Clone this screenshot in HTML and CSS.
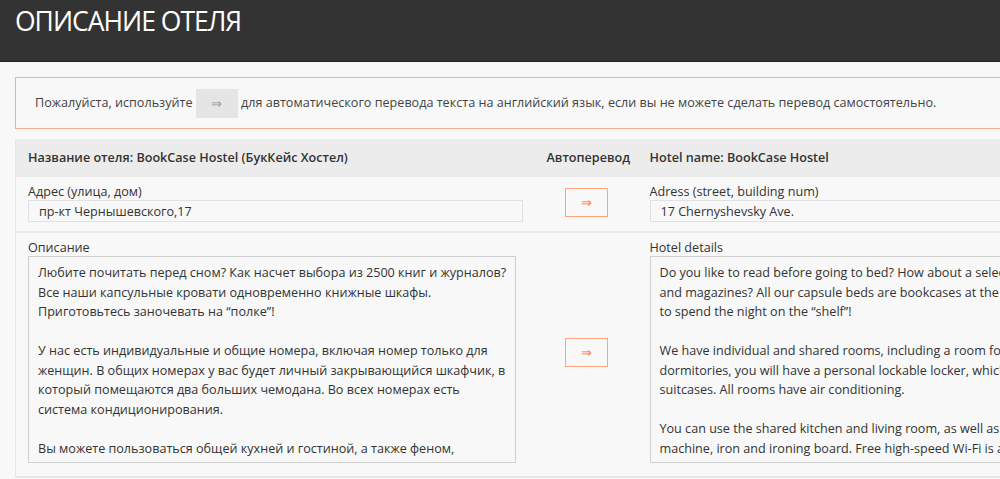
FILE: index.html
```html
<!DOCTYPE html>
<html lang="ru">
  <head>
    <meta charset="UTF-8" />
    <meta name="viewport" content="width=device-width, initial-scale=1.0" />
    <title>Описание отеля</title>
    <link rel="stylesheet" href="styles.css">
  </head>
  <body>
    <div class="page-header">
      <h1>ОПИСАНИЕ ОТЕЛЯ</h1>
    </div>
    <div class="container">
      <div class="notice">
        Пожалуйста, используйте <span class="notice-btn">&rArr;</span> для автоматического перевода текста на английский язык, если вы не можете сделать перевод самостоятельно.
      </div>
      <table class="translate-table">
        <colgroup>
          <col class="col-src" />
          <col class="col-auto" />
          <col class="col-dst" />
        </colgroup>
        <thead>
          <tr>
            <th>Название отеля: BookCase Hostel (БукКейс Хостел)</th>
            <th class="center">Автоперевод</th>
            <th>Hotel name: BookCase Hostel</th>
          </tr>
        </thead>
        <tbody>
          <tr>
            <td>
              <label class="field-label">Адрес (улица, дом)</label>
              <input type="text" class="field-input" value="пр-кт Чернышевского,17" />
            </td>
            <td class="center">
              <button class="translate-btn">&rArr;</button>
            </td>
            <td>
              <label class="field-label">Adress (street, building num)</label>
              <input type="text" class="field-input" value="17 Chernyshevsky Ave." />
            </td>
          </tr>
          <tr>
            <td>
              <label class="field-label">Описание</label>
              <textarea class="field-text src-text" wrap="off">Любите почитать перед сном? Как насчет выбора из 2500 книг и журналов?
Все наши капсульные кровати одновременно книжные шкафы.
Приготовьтесь заночевать на “полке”!

У нас есть индивидуальные и общие номера, включая номер только для
женщин. В общих номерах у вас будет личный закрывающийся шкафчик, в
который помещаются два больших чемодана. Во всех номерах есть
система кондиционирования.

Вы можете пользоваться общей кухней и гостиной, а также феном,
стиральной машиной, утюгом и гладильной доской. Бесплатный
высокоскоростной Wi-Fi доступен во всех помещениях.</textarea>
            </td>
            <td class="center">
              <button class="translate-btn">&rArr;</button>
            </td>
            <td>
              <label class="field-label">Hotel details</label>
              <textarea class="field-text" wrap="off">Do you like to read before going to bed? How about a selection of 2500 books
and magazines? All our capsule beds are bookcases at the same time. Get ready
to spend the night on the “shelf”!

We have individual and shared rooms, including a room for women only. In shared
dormitories, you will have a personal lockable locker, which can hold two large
suitcases. All rooms have air conditioning.

You can use the shared kitchen and living room, as well as hair dryer, washing
machine, iron and ironing board. Free high-speed Wi-Fi is available in all areas
of the hostel.</textarea>
            </td>
          </tr>
        </tbody>
      </table>
    </div>
  </body>
</html>
```

FILE: styles.css
```css
html,
body {
  overflow: hidden;
}
body {
  margin: 0;
  font-family: "Open Sans", Arial, sans-serif;
  font-size: 12.6px;
  color: #333;
  background: #f8f8f8;
}
.page-header {
  height: 58px;
  background: #333;
  border-bottom: 1px solid #222;
  padding: 3px 15px 0;
}
.page-header h1 {
  margin: 0;
  font-size: 26.5px;
  font-weight: 400;
  letter-spacing: -1px;
  color: #fff;
  line-height: normal;
}
.container {
  width: 1250px;
  padding: 15px;
}
.notice {
  border: 1px solid #f2b28e;
  padding: 10px 19px;
  line-height: 29px;
  color: #444;
}
.notice-btn {
  display: inline-block;
  width: 42px;
  height: 29px;
  background: #e5e5e5;
  color: #999;
  text-align: center;
  vertical-align: middle;
}
.translate-table {
  margin-top: 10px;
  width: 1145px;
  border-collapse: collapse;
  table-layout: fixed;
  border-left: 1px solid #e6e6e6;
}
.col-src {
  width: 519px;
}
.col-auto {
  width: 103px;
}
.translate-table th {
  background: #ececec;
  font-weight: 600;
  text-align: left;
  padding: 9px 12px;
  line-height: 19px;
  color: #333;
}
.translate-table td {
  border-top: 1px solid #e6e6e6;
  border-bottom: 2px solid #e6e6e6;
  padding: 5px 12px 9px;
  vertical-align: top;
}
.translate-table .center {
  text-align: center;
  vertical-align: middle;
}
.field-label {
  display: block;
  padding-top: 2px;
  line-height: 16px;
  color: #333;
}
.field-input {
  display: block;
  box-sizing: border-box;
  width: 100%;
  height: 22px;
  margin: 0;
  padding: 0 10px;
  border: 1px solid #e2e2e2;
  background: #f8f8f8;
  font-family: "Open Sans", Arial, sans-serif;
  font-size: 12.6px;
  color: #333;
}
.field-text {
  display: block;
  box-sizing: border-box;
  width: 100%;
  height: 207px;
  margin: 0 0 4px;
  padding: 6px 9px;
  border: 1px solid #cfcfcf;
  background: #f8f8f8;
  font-family: "Open Sans", Arial, sans-serif;
  font-size: 12.6px;
  line-height: 19.5px;
  color: #333;
  overflow: hidden;
  resize: none;
}
.src-text {
  width: 488px;
}
.translate-btn {
  width: 43px;
  height: 29px;
  padding: 0;
  border: 1px solid #ffa57e;
  background: #f8f8f8;
  color: #ff7a3d;
  font-size: 13px;
  cursor: pointer;
}
```
